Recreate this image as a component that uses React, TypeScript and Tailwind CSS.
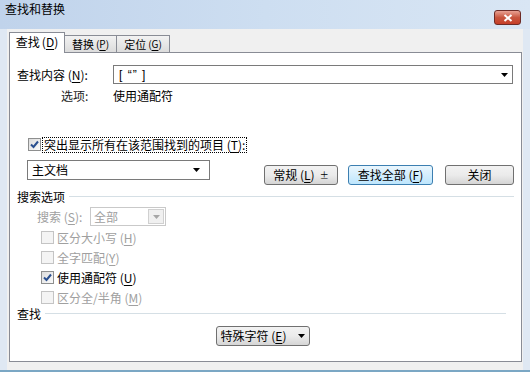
import React from "react";

function U({ children }: { children: React.ReactNode }) {
  return <span className="underline underline-offset-2">{children}</span>;
}

function Check({ checked, disabled }: { checked?: boolean; disabled?: boolean }) {
  return (
    <span
      className={`inline-flex h-[13px] w-[13px] shrink-0 items-center justify-center border ${
        disabled ? "border-[#c4c4c4] bg-[#f4f4f4]" : "border-[#8e8f8f] bg-gradient-to-br from-[#dcdcdc] to-[#fbfbfb]"
      }`}
    >
      {checked && (
        <svg width="9" height="9" viewBox="0 0 9 9">
          <path d="M1 4.5 L3.5 7 L8 1.5" fill="none" stroke="#2a4f8f" strokeWidth="2" />
        </svg>
      )}
    </span>
  );
}

function Btn({
  children,
  focused,
  className = "",
}: {
  children: React.ReactNode;
  focused?: boolean;
  className?: string;
}) {
  return (
    <div
      className={`flex h-[20px] items-center justify-center whitespace-nowrap rounded-[3px] border text-[12px] ${
        focused
          ? "border-[#3c7fb1] bg-gradient-to-b from-[#eaf6fd] to-[#bee6fd]"
          : "border-[#707070] bg-gradient-to-b from-[#f2f2f2] via-[#ebebeb] to-[#d5d5d5]"
      } ${className}`}
    >
      {children}
    </div>
  );
}

function Arrow({ color = "#000" }: { color?: string }) {
  return (
    <svg width="7" height="4" viewBox="0 0 7 4">
      <path d="M0 0 H7 L3.5 4 Z" fill={color} />
    </svg>
  );
}

function GroupHead({ title, wide }: { title: string; wide?: boolean }) {
  return (
    <div className="flex h-[15px] items-center">
      <span>{title}</span>
      <div className={`ml-[4px] h-px flex-1 bg-[#d5dfe5] ${wide ? "mr-[15px]" : "mr-[7px]"}`} />
    </div>
  );
}

export default function App() {
  return (
    <div className="relative flex h-[372px] w-[530px] flex-col overflow-hidden bg-[#dfe8f3] font-['Noto_Sans_CJK_SC','Microsoft_YaHei',sans-serif] text-[12px] leading-none text-black">
      {/* title bar */}
      <div className="flex h-[29px] shrink-0 items-start justify-between bg-gradient-to-r from-[#c0d3eb] via-[#cddef1] to-[#d9e6f4]">
        <span className="pl-[5px] pt-[3px] text-[12px]">查找和替换</span>
        <div className="mr-[9px] mt-[10px] flex h-[15px] w-[27px] items-center justify-center rounded-[3px] border border-[#6d2b26] bg-gradient-to-b from-[#e8a193] via-[#c8563f] to-[#c63e28]">
          <svg width="10" height="8" viewBox="0 0 10 8">
            <path d="M1.5 1 L8.5 7 M8.5 1 L1.5 7" stroke="#fff" strokeWidth="2" />
          </svg>
        </div>
      </div>

      {/* body */}
      <div className="mx-[7px] flex flex-1 flex-col bg-[#f0f0f0] pl-[2px] pr-[1px] pt-[3px]">
        {/* tabs */}
        <div className="flex h-[20px] items-end">
          <div className="relative z-10 -mb-px flex h-[21px] w-[56px] items-center justify-center border border-b-0 border-[#898c95] bg-white pb-[2px]">
            查找 <span className="ml-[2px]">(<U>D</U>)</span>
          </div>
          <div className="flex h-[17px] w-[52px] items-center justify-center border border-l-0 border-b-0 border-[#898c95] bg-gradient-to-b from-[#f2f2f2] to-[#dcdcdc] text-[11px]">
            替换 <span className="ml-[2px] text-[10px]">(<U>P</U>)</span>
          </div>
          <div className="flex h-[17px] w-[53px] items-center justify-center border border-l-0 border-b-0 border-[#898c95] bg-gradient-to-b from-[#f2f2f2] to-[#dcdcdc] text-[11px]">
            定位 <span className="ml-[2px] text-[10px]">(<U>G</U>)</span>
          </div>
        </div>

        {/* panel */}
        <div className="flex h-[310px] flex-col border border-[#898c95] bg-white pl-[7px]">
          <div className="mt-[12px] flex h-[19px] items-center">
            <span className="w-[96px]">
              查找内容 (<U>N</U>):
            </span>
            <div className="mr-[8px] flex h-[19px] flex-1 items-center justify-between border border-[#7a7a7a] pl-[5px] pr-[4px]">
              <span className="font-['Liberation_Sans',sans-serif] tracking-[1px]">[ “” ]</span>
              <Arrow />
            </div>
          </div>

          <div className="mt-[4px] flex h-[16px] items-center">
            <span className="w-[96px] pl-[44px] text-[#222]">选项:</span>
            <span>使用通配符</span>
          </div>

          <div className="mt-[33px] flex h-[15px] items-center pl-[11px]">
            <Check checked />
            <span className="ml-px border border-dotted border-black px-px py-px">
              突出显示所有在该范围找到的项目 (<U>T</U>):
            </span>
          </div>

          <div className="mt-[8px] flex items-start pl-[10px]">
            <div className="flex h-[20px] w-[183px] items-center justify-between border border-[#7a7a7a] pl-[4px] pr-[9px]">
              <span>主文档</span>
              <Arrow />
            </div>
            <Btn className="ml-[54px] mt-[5px] w-[74px]">
              常规 (<U>L</U>)<span className="ml-[5px] text-[9px]">±</span>
            </Btn>
            <Btn focused className="ml-[10px] mt-[5px] w-[85px]">
              查找全部 (<U>F</U>)
            </Btn>
            <Btn className="ml-[12px] mt-[5px] w-[69px]">关闭</Btn>
          </div>

          <div className="mt-[4px]">
            <GroupHead title="搜索选项" />
          </div>

          <div className="mt-[3px] flex h-[19px] items-center pl-[20px] text-[#a0a0a0]">
            <span className="w-[53px]">
              搜索 (<U>S</U>):
            </span>
            <div className="flex h-[19px] w-[76px] items-center justify-between border border-[#c9c9c9] pl-[3px]">
              <span>全部</span>
              <div className="mr-px flex h-[15px] w-[16px] items-center justify-center border border-[#d0d0d0] bg-[#f0f0f0]">
                <Arrow color="#a6a6a6" />
              </div>
            </div>
          </div>

          <div className="mt-[5px] flex flex-col gap-[7px] pl-[24px]">
            <div className="flex h-[13px] items-center text-[#a0a0a0]">
              <Check disabled />
              <span className="ml-[3px]">
                区分大小写 (<U>H</U>)
              </span>
            </div>
            <div className="flex h-[13px] items-center text-[#a0a0a0]">
              <Check disabled />
              <span className="ml-[3px]">
                全字匹配(<U>Y</U>)
              </span>
            </div>
            <div className="flex h-[13px] items-center">
              <Check checked />
              <span className="ml-[3px]">
                使用通配符 (<U>U</U>)
              </span>
            </div>
            <div className="flex h-[13px] items-center text-[#a0a0a0]">
              <Check disabled />
              <span className="ml-[3px]">
                区分全/半角 (<U>M</U>)
              </span>
            </div>
          </div>

          <div className="mt-[2px]">
            <GroupHead title="查找" wide />
          </div>

          <div className="mt-[5px] flex justify-center pr-[12px]">
            <Btn className="h-[19px] w-[94px]">
              特殊字符 (<U>E</U>)
              <span className="ml-[12px] flex">
                <Arrow />
              </span>
            </Btn>
          </div>
        </div>

        <div className="flex-1" />
      </div>
      <div className="h-[2px] shrink-0 bg-[#7ba7c4]" />
    </div>
  );
}
